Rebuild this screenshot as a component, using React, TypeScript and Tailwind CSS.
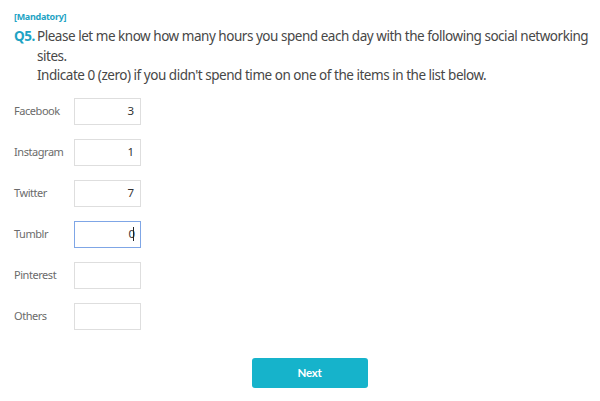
import React from "react";

const rows: { label: string; value: string; focused?: boolean }[] = [
  { label: "Facebook", value: "3" },
  { label: "Instagram", value: "1" },
  { label: "Twitter", value: "7" },
  { label: "Tumblr", value: "0", focused: true },
  { label: "Pinterest", value: "" },
  { label: "Others", value: "" },
];

export default function App() {
  return (
    <div
      className="w-[600px] h-[401px] bg-white relative overflow-hidden"
      style={{ fontFamily: "'Noto Sans', 'Open Sans', sans-serif" }}
    >
      <div className="pl-[14px] pt-[11px]">
        <div className="text-[9px] font-bold text-[#1ea3c4] leading-[12px] tracking-[-0.3px]">[Mandatory]</div>
        <div className="flex mt-[4px] text-[13.5px] leading-[19.5px] text-[#474747] tracking-[-0.47px]">
          <span className="font-bold text-[#1ea3c4] w-[23px] shrink-0">Q5.</span>
          <div className="w-[560px]">
            Please let me know how many hours you spend each day with the following social networking sites.
            <br />
            Indicate 0 (zero) if you didn't spend time on one of the items in the list below.
          </div>
        </div>
      </div>
      <div className="pl-[14px] mt-[12px] flex flex-col gap-[14px]">
        {rows.map((r) => (
          <div key={r.label} className="flex items-center h-[27px]">
            <div className="w-[60px] text-[11px] tracking-[-0.45px] text-[#6b6b6b]">{r.label}</div>
            <div
              className={
                "w-[67px] h-[27px] border flex items-center justify-end pr-[6px] text-[11.5px] text-[#333] " +
                (r.focused ? "border-[#7fa6e6]" : "border-[#dedede]")
              }
            >
              {r.value}
              {r.focused && <span className="w-px h-[14px] bg-[#222] ml-[-2px]"></span>}
            </div>
          </div>
        ))}
      </div>
      <div className="flex justify-center mt-[28px] pl-[19px]">
        <button
          className="w-[116px] h-[30px] rounded-[3px] bg-[#16b3cb] text-white text-[11.5px] font-bold tracking-[-0.3px]"
          style={{ fontFamily: "Lato, sans-serif" }}
        >
          Next
        </button>
      </div>
    </div>
  );
}
